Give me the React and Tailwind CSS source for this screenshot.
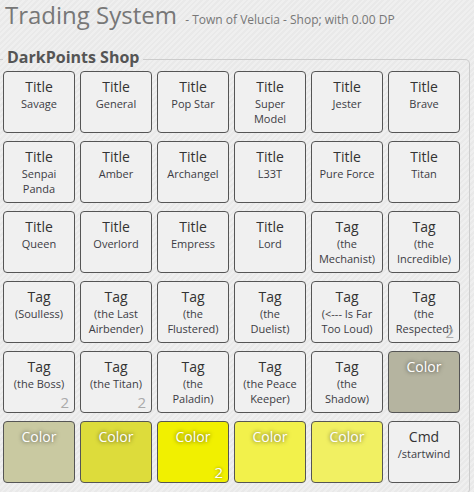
const items = [
  { kind: "Title", sub: "Savage" },
  { kind: "Title", sub: "General" },
  { kind: "Title", sub: "Pop Star" },
  { kind: "Title", sub: "Super Model" },
  { kind: "Title", sub: "Jester" },
  { kind: "Title", sub: "Brave" },
  { kind: "Title", sub: "Senpai Panda" },
  { kind: "Title", sub: "Amber" },
  { kind: "Title", sub: "Archangel" },
  { kind: "Title", sub: "L33T" },
  { kind: "Title", sub: "Pure Force" },
  { kind: "Title", sub: "Titan" },
  { kind: "Title", sub: "Queen" },
  { kind: "Title", sub: "Overlord" },
  { kind: "Title", sub: "Empress" },
  { kind: "Title", sub: "Lord" },
  { kind: "Tag", sub: "(the Mechanist)" },
  { kind: "Tag", sub: "(the Incredible)" },
  { kind: "Tag", sub: "(Soulless)" },
  { kind: "Tag", sub: "(the Last Airbender)" },
  { kind: "Tag", sub: "(the Flustered)" },
  { kind: "Tag", sub: "(the Duelist)" },
  { kind: "Tag", sub: "(<--- Is Far Too Loud)" },
  { kind: "Tag", sub: "(the Respected)", qty: 2 },
  { kind: "Tag", sub: "(the Boss)", qty: 2 },
  { kind: "Tag", sub: "(the Titan)", qty: 2 },
  { kind: "Tag", sub: "(the Paladin)" },
  { kind: "Tag", sub: "(the Peace Keeper)" },
  { kind: "Tag", sub: "(the Shadow)" },
  { kind: "Color", color: "#b5b4a0" },
  { kind: "Color", color: "#c9c9a1" },
  { kind: "Color", color: "#dddc3b" },
  { kind: "Color", color: "#f1f000", qty: 2 },
  { kind: "Color", color: "#f2f14b" },
  { kind: "Color", color: "#f1f062" },
  { kind: "Cmd", sub: "/startwind" },
];

function ShopItem({ item }) {
  const isColor = item.kind === "Color";
  return (
    <div
      className={
        "relative flex h-[62px] flex-col items-center rounded-[4px] border border-[#555] px-[6px] pt-[6px] text-center " +
        (isColor ? "" : "bg-[#f0f0f0]")
      }
      style={isColor ? { backgroundColor: item.color } : undefined}
    >
      {isColor ? (
        <div className="text-[14px] leading-[18px] text-white [text-shadow:0_0_4px_rgba(0,0,0,0.7)]">
          Color
        </div>
      ) : (
        <>
          <div className="text-[14px] leading-[18px] text-[#333]">{item.kind}</div>
          <div className="text-[11px] leading-[15px] text-[#3c3c44]">{item.sub}</div>
        </>
      )}
      {item.qty && (
        <span
          className={
            "absolute bottom-[3px] right-[5px] text-[15px] leading-[14px] " +
            (isColor ? "text-white [text-shadow:0_0_3px_rgba(0,0,0,0.45)]" : "text-[#aaa]")
          }
        >
          {item.qty}
        </span>
      )}
    </div>
  );
}

export default function App() {
  return (
    <div className="min-h-screen overflow-hidden bg-[repeating-linear-gradient(135deg,#efefef_0px,#efefef_2px,#e9e9e9_2px,#e9e9e9_4px)] font-['Open_Sans',sans-serif]">
      <h1 className="pl-[5px] pt-[1px] text-[24px] font-normal leading-[28px] text-[#777]">
        Trading System{" "}
        <small className="ml-[2px] text-[12px] leading-[16px] text-[#777]">
          - Town of Velucia - Shop; with 0.00 DP
        </small>
      </h1>
      <fieldset className="mt-[16px] w-[470px] rounded-r-[5px] border border-l-0 border-[#ccc] pb-[10px] pl-[3px] pt-0">
        <legend className="px-[4px] pb-[4px] text-[16px] font-bold leading-6 text-[#555]">
          DarkPoints Shop
        </legend>
        <div className="-mt-[2px] grid grid-cols-[repeat(6,72px)] gap-x-[5px] gap-y-[8px]">
          {items.map((item, i) => (
            <ShopItem key={i} item={item} />
          ))}
        </div>
      </fieldset>
    </div>
  );
}
